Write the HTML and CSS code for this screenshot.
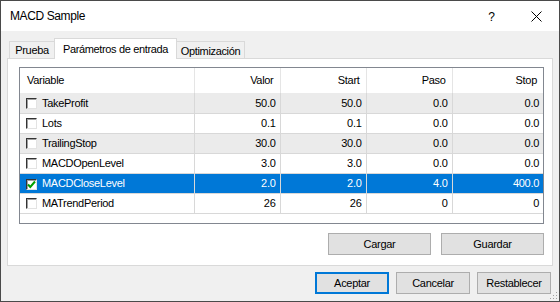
FILE: index.html
```html
<!DOCTYPE html>
<html lang="es">
<head>
	<meta charset="UTF-8">
	<title>MACD Sample</title>
	<link rel="stylesheet" href="styles.css">
</head>
<body class="body">
	<div class="window">
		<header class="titlebar">
			<span class="titlebar__title">MACD Sample</span>
			<span class="titlebar__btn titlebar__help">?</span>
			<span class="titlebar__btn">
				<svg width="11" height="11" viewBox="0 0 11 11"><path d="M0.5 0.5 L10.5 10.5 M10.5 0.5 L0.5 10.5" stroke="#000" stroke-width="1" fill="none"/></svg>
			</span>
		</header>
		<div class="client">
			<nav class="tabs">
				<div class="tab tab--first">Prueba</div>
				<div class="tab tab--active">Parámetros de entrada</div>
				<div class="tab tab--last">Optimización</div>
			</nav>
			<section class="panel">
				<div class="grid">
					<table class="grid__table">
						<colgroup>
							<col class="col-var">
							<col class="col-num">
							<col class="col-num">
							<col class="col-num">
							<col>
						</colgroup>
						<thead>
							<tr class="grid__head">
								<th class="th th--left">Variable</th>
								<th class="th">Valor</th>
								<th class="th">Start</th>
								<th class="th">Paso</th>
								<th class="th th--last">Stop</th>
							</tr>
						</thead>
						<tbody>
							<tr class="row row--alt">
								<td class="cell cell--name"><span class="check"></span>TakeProfit</td>
								<td class="cell">50.0</td><td class="cell">50.0</td><td class="cell">0.0</td><td class="cell">0.0</td>
							</tr>
							<tr class="row">
								<td class="cell cell--name"><span class="check"></span>Lots</td>
								<td class="cell">0.1</td><td class="cell">0.1</td><td class="cell">0.0</td><td class="cell">0.0</td>
							</tr>
							<tr class="row row--alt">
								<td class="cell cell--name"><span class="check"></span>TrailingStop</td>
								<td class="cell">30.0</td><td class="cell">30.0</td><td class="cell">0.0</td><td class="cell">0.0</td>
							</tr>
							<tr class="row">
								<td class="cell cell--name"><span class="check"></span>MACDOpenLevel</td>
								<td class="cell">3.0</td><td class="cell">3.0</td><td class="cell">0.0</td><td class="cell">0.0</td>
							</tr>
							<tr class="row row--selected">
								<td class="cell cell--name"><span class="check check--on"><svg width="9" height="9" viewBox="0 0 9 9"><path d="M1 4.5 L3.3 7 L8 1.5" stroke="#00a000" stroke-width="2" fill="none"/></svg></span>MACDCloseLevel</td>
								<td class="cell">2.0</td><td class="cell">2.0</td><td class="cell">4.0</td><td class="cell">400.0</td>
							</tr>
							<tr class="row">
								<td class="cell cell--name"><span class="check"></span>MATrendPeriod</td>
								<td class="cell">26</td><td class="cell">26</td><td class="cell">0</td><td class="cell">0</td>
							</tr>
						</tbody>
					</table>
				</div>
				<div class="panel__buttons">
					<button class="btn btn--wide">Cargar</button>
					<button class="btn btn--wide">Guardar</button>
				</div>
			</section>
			<footer class="footer">
				<button class="btn btn--default">Aceptar</button>
				<button class="btn">Cancelar</button>
				<button class="btn">Restablecer</button>
			</footer>
		</div>
		<svg class="grip" width="8" height="8" viewBox="0 0 8 8">
			<rect x="6" y="0" width="1" height="1" fill="#a0a0a0"/>
			<rect x="3" y="3" width="1" height="1" fill="#a0a0a0"/>
			<rect x="6" y="3" width="1" height="1" fill="#a0a0a0"/>
			<rect x="0" y="6" width="1" height="1" fill="#a0a0a0"/>
			<rect x="3" y="6" width="1" height="1" fill="#a0a0a0"/>
			<rect x="6" y="6" width="1" height="1" fill="#a0a0a0"/>
		</svg>
	</div>
</body>
</html>
```
FILE: styles.css
```css
:root {
	--face: #f0f0f0;
	--line: #d9d9d9;
	--cell-line: #d8d8d8;
	--accent: #0078d7;
	--alt-row: #ebebeb;
}

*,
*::before,
*::after {
	box-sizing: border-box;
}

.body {
	margin: 0;
	font-family: "Liberation Sans", Arial, sans-serif;
	color: #000;
}

.window {
	position: relative;
	display: flex;
	flex-direction: column;
	width: 560px;
	height: 302px;
	border: 1px solid #4a4a4a;
	background-color: var(--face);
}

.titlebar {
	display: flex;
	align-items: center;
	height: 30px;
	padding-left: 9px;
	background-color: #fff;
}

.titlebar__title {
	flex: 1;
	font-size: 12px;
	letter-spacing: -0.4px;
}

.titlebar__btn {
	display: flex;
	justify-content: center;
	align-items: center;
	width: 45px;
	height: 30px;
}

.titlebar__help {
	font-size: 12px;
	padding-top: 1px;
}

.client {
	flex: 1;
	display: flex;
	flex-direction: column;
	padding: 7px 6px 7px 6px;
}

.tabs {
	position: relative;
	z-index: 1;
	display: flex;
	align-items: flex-end;
	height: 21px;
	margin-bottom: -1px;
	padding-left: 2px;
}

.tab {
	display: flex;
	justify-content: center;
	align-items: center;
	height: 17px;
	margin-bottom: 1px;
	border: 1px solid var(--line);
	border-bottom: none;
	font-size: 11px;
	letter-spacing: -0.35px;
}

.tab--first {
	width: 45px;
	border-right: none;
}

.tab--active {
	width: 123px;
	height: 21px;
	margin-bottom: 0;
	padding-bottom: 1px;
	background-color: #fff;
}

.tab--last {
	width: 68px;
	border-left: none;
	padding-top: 1px;
}

.panel {
	display: flex;
	flex-direction: column;
	height: 208px;
	padding: 8px 8px 10px 11px;
	background-color: #fff;
	border: 1px solid var(--line);
}

.grid {
	height: 157px;
	border: 1px solid #828790;
	background-color: #fff;
}

.grid__table {
	width: 523px;
	border-collapse: collapse;
	table-layout: fixed;
	font-size: 11px;
	letter-spacing: -0.3px;
}

.col-var {
	width: 174px;
}

.col-num {
	width: 86px;
}

.th {
	height: 25px;
	padding: 0 6px 1px 0;
	font-weight: normal;
	text-align: right;
	border-right: 1px solid #e5e5e5;
}

.th--left {
	padding-left: 7px;
	text-align: left;
}

.th--last {
	border-right: none;
}

.row {
	height: 20px;
}

.row--alt {
	background-color: var(--alt-row);
}

.row--selected {
	background-color: var(--accent);
	color: #fff;
}

.cell {
	height: 20px;
	padding: 0 4px 0 0;
	text-align: right;
	white-space: nowrap;
	border-right: 1px solid var(--cell-line);
	border-bottom: 1px solid var(--cell-line);
}

.cell:last-child {
	border-right: none;
}

.cell--name {
	padding-left: 6px;
	text-align: left;
}

.check {
	display: inline-flex;
	justify-content: center;
	align-items: center;
	width: 11px;
	height: 11px;
	margin-right: 5px;
	vertical-align: -2px;
	background-color: #fff;
	border-top: 1px solid #333;
	border-left: 1px solid #333;
	border-right: 1px solid #e3e3e3;
	border-bottom: 1px solid #e3e3e3;
	box-shadow: inset 1px 1px 0 #a0a0a0;
}

.panel__buttons {
	display: flex;
	justify-content: flex-end;
	gap: 10px;
	margin-top: 9px;
}

.btn {
	width: 74px;
	height: 22px;
	padding: 0;
	font-family: inherit;
	font-size: 11px;
	letter-spacing: -0.3px;
	color: #000;
	background-color: #e1e1e1;
	border: 1px solid #adadad;
}

.btn--wide {
	width: 103px;
}

.btn--default {
	border: 2px solid var(--accent);
}

.footer {
	display: flex;
	justify-content: flex-end;
	gap: 7px;
	margin-top: 6px;
	padding-right: 2px;
}

.grip {
	position: absolute;
	right: 1px;
	bottom: 1px;
}
```
